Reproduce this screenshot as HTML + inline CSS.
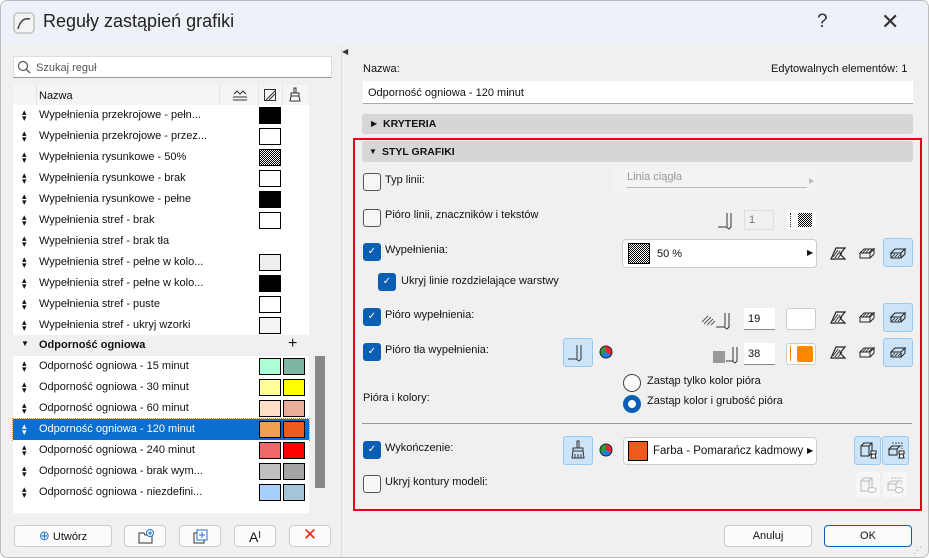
<!DOCTYPE html>
<html><head><meta charset="utf-8"><style>
*{box-sizing:border-box;margin:0;padding:0}
body{width:929px;height:558px;background:#fff;font-family:"Liberation Sans",sans-serif;font-size:11px;color:#111;position:relative;overflow:hidden}
.win{position:absolute;left:0;top:0;width:929px;height:558px;background:#f0f0f0;border:1px solid #bbb;border-radius:7px;overflow:hidden}
.title{position:absolute;left:0;top:0;width:929px;height:45px;background:#eef1f7}
.abs{position:absolute}
.row{position:absolute;left:12px;width:296px;height:21px;background:#fff}
.row .ar{position:absolute;left:9px;top:4px;font-size:9px;line-height:6px}
.row .t{position:absolute;left:26px;top:4px;white-space:nowrap}
.sw{position:absolute;width:22px;height:17px;border:1px solid #000;top:2px}
.btn{position:absolute;background:#fbfbfb;border:1px solid #ccc;border-radius:4px;text-align:center}
.cb{position:absolute;width:18px;height:18px;border:1px solid #555;border-radius:3px;background:#f7f7f7}
.cbk{position:absolute;width:18px;height:18px;border-radius:3px;background:#0a5fb4;color:#fff;font-size:10px;text-align:center;line-height:18px}
.lbl{position:absolute;white-space:nowrap}
.ib{position:absolute;width:30px;height:29px;border-radius:3px}
.ibs{background:#cce4f7;border:1px solid #99c8ef}
.fld{position:absolute;background:#fff;border:1px solid #ddd;border-bottom:1px solid #888}
svg.ic{position:absolute}
</style></head><body><div class="win">
<svg width="0" height="0" style="position:absolute"><defs>
<symbol id="sec" viewBox="0 0 18 14"><path d="M2 13L7 2H16L11 8L16 13Z" fill="none" stroke="#222" stroke-width="1.2"/><path d="M4 11L9 4M6 12L11 5M9 12L13 7" stroke="#222" stroke-width="0.9"/></symbol>
<symbol id="box" viewBox="0 0 18 14"><path d="M2 7L6 3H16L12 7ZM2 7H12V12H2ZM12 7L16 3V8L12 12" fill="none" stroke="#222" stroke-width="1"/><path d="M5 6.5L8 3.5M8 6.5L11 3.5M11 6.5L14 3.5" stroke="#222" stroke-width="0.8"/></symbol>
<symbol id="box2" viewBox="0 0 18 14"><path d="M2 7L6 3H16L12 7ZM2 7H12V12H2ZM12 7L16 3V8L12 12" fill="none" stroke="#222" stroke-width="1"/><path d="M3 11L6 8M6 11L9 8M9 11L12 8" stroke="#222" stroke-width="0.8"/></symbol>
</defs></svg>
<div class="title"></div>
<svg class="abs" style="left:12px;top:11px" width="22" height="22"><rect x="1" y="1" width="20" height="20" rx="4" fill="#f4f4f4" stroke="#aaa"/><path d="M5 17 Q8 5 17 7" stroke="#444" stroke-width="1.5" fill="none"/></svg>
<div class="lbl" style="left:42px;top:10px;font-size:18px;color:#222">Reguły zastąpień grafiki</div>
<div class="lbl" style="left:816px;top:10px;font-size:19px;color:#333">?</div>
<div class="lbl" style="left:880px;top:8px;font-size:22px;color:#333">✕</div>

<!-- left -->
<div class="fld" style="left:12px;top:55px;width:319px;height:22px;border:1px solid #ddd;border-bottom:1px solid #999"></div>
<svg class="abs" style="left:16px;top:59px" width="14" height="14"><circle cx="6" cy="6" r="4.5" stroke="#555" fill="none" stroke-width="1.2"/><path d="M9 9l4 4" stroke="#555" stroke-width="1.3"/></svg>
<div class="lbl" style="left:35px;top:61px;color:#555">Szukaj reguł</div>
<div class="abs" style="left:12px;top:84px;width:295px;height:20px;background:#f5f5f5"></div>
<div class="lbl" style="left:38px;top:89px">Nazwa</div>
<div class="abs" style="left:35px;top:84px;width:1px;height:20px;background:#e4e4e4"></div>
<div class="abs" style="left:218px;top:84px;width:1px;height:20px;background:#e4e4e4"></div>
<div class="abs" style="left:257px;top:84px;width:1px;height:20px;background:#e4e4e4"></div>
<div class="abs" style="left:281px;top:84px;width:1px;height:20px;background:#e4e4e4"></div>
<svg class="ic" style="left:231px;top:88px" width="16" height="12"><path d="M2 5L5 2L8 5L11 2L14 5M1 8H15M1 11H15" stroke="#333" fill="none"/></svg>
<svg class="ic" style="left:262px;top:87px" width="14" height="14"><rect x="1.5" y="1.5" width="11" height="11" fill="none" stroke="#333"/><path d="M3 12L12 3M6 12L12 6" stroke="#333"/></svg>
<svg class="ic" style="left:288px;top:86px" width="12" height="15"><path d="M5 1H7V6H5Z M2 6H10V9H2Z M2 9L1 14H11L10 9" stroke="#333" fill="none"/></svg>
<div class="abs" style="left:12px;top:104px;width:296px;height:408px;background:#fff"></div>

<div class="row" style="top:104px"><span class="ar">▴<br>▾</span><span class="t">Wypełnienia przekrojowe - pełn...</span><span class="sw" style="left:246px;background:#000"></span></div>
<div class="row" style="top:125px"><span class="ar">▴<br>▾</span><span class="t">Wypełnienia przekrojowe - przez...</span><span class="sw" style="left:246px;background:#fff"></span></div>
<div class="row" style="top:146px"><span class="ar">▴<br>▾</span><span class="t">Wypełnienia rysunkowe - 50%</span><span class="sw" style="left:246px;background:repeating-conic-gradient(#000 0 25%,#fff 0 50%) 0 0/2px 2px"></span></div>
<div class="row" style="top:167px"><span class="ar">▴<br>▾</span><span class="t">Wypełnienia rysunkowe - brak</span><span class="sw" style="left:246px;background:#fff"></span></div>
<div class="row" style="top:188px"><span class="ar">▴<br>▾</span><span class="t">Wypełnienia rysunkowe - pełne</span><span class="sw" style="left:246px;background:#000"></span></div>
<div class="row" style="top:209px"><span class="ar">▴<br>▾</span><span class="t">Wypełnienia stref - brak</span><span class="sw" style="left:246px;background:#fff"></span></div>
<div class="row" style="top:230px"><span class="ar">▴<br>▾</span><span class="t">Wypełnienia stref - brak tła</span></div>
<div class="row" style="top:251px"><span class="ar">▴<br>▾</span><span class="t">Wypełnienia stref - pełne w kolo...</span><span class="sw" style="left:246px;background:#eee"></span></div>
<div class="row" style="top:272px"><span class="ar">▴<br>▾</span><span class="t">Wypełnienia stref - pełne w kolo...</span><span class="sw" style="left:246px;background:#000"></span></div>
<div class="row" style="top:293px"><span class="ar">▴<br>▾</span><span class="t">Wypełnienia stref - puste</span><span class="sw" style="left:246px;background:#fff"></span></div>
<div class="row" style="top:314px"><span class="ar">▴<br>▾</span><span class="t">Wypełnienia stref - ukryj wzorki</span><span class="sw" style="left:246px;background:#f4f4f4"></span></div>
<div class="row" style="top:334px;background:#f0f0f0"><span class="lbl" style="left:8px;top:4px;font-size:8px">▼</span><span class="t" style="font-weight:bold">Odporność ogniowa</span><span class="lbl" style="left:275px;top:0px;font-size:16px">+</span></div>
<div class="row" style="top:355px"><span class="ar">▴<br>▾</span><span class="t">Odporność ogniowa -  15 minut</span><span class="sw" style="left:246px;background:#aaffd4"></span><span class="sw" style="left:270px;background:#7fb5a5"></span></div>
<div class="row" style="top:376px"><span class="ar">▴<br>▾</span><span class="t">Odporność ogniowa -  30 minut</span><span class="sw" style="left:246px;background:#ffff99"></span><span class="sw" style="left:270px;background:#ffff00"></span></div>
<div class="row" style="top:397px"><span class="ar">▴<br>▾</span><span class="t">Odporność ogniowa -  60 minut</span><span class="sw" style="left:246px;background:#ffe0c4"></span><span class="sw" style="left:270px;background:#e8ae9a"></span></div>
<div class="row" style="top:418px;background:#0a6fd0;color:#fff;outline:1px dotted #e08020"><span class="ar" style="color:#fff">▴<br>▾</span><span class="t">Odporność ogniowa - 120 minut</span><span class="sw" style="left:246px;background:#f0a050"></span><span class="sw" style="left:270px;background:#ec5a1c"></span></div>
<div class="row" style="top:439px"><span class="ar">▴<br>▾</span><span class="t">Odporność ogniowa - 240 minut</span><span class="sw" style="left:246px;background:#f06868"></span><span class="sw" style="left:270px;background:#ff0000"></span></div>
<div class="row" style="top:460px"><span class="ar">▴<br>▾</span><span class="t">Odporność ogniowa - brak wym...</span><span class="sw" style="left:246px;background:#c0c0c0"></span><span class="sw" style="left:270px;background:#a4a4a4"></span></div>
<div class="row" style="top:481px"><span class="ar">▴<br>▾</span><span class="t">Odporność ogniowa - niezdefini...</span><span class="sw" style="left:246px;background:#a8d0ff"></span><span class="sw" style="left:270px;background:#a4c4d8"></span></div>
<div class="abs" style="left:314px;top:355px;width:10px;height:132px;background:#888"></div>

<div class="btn" style="left:13px;top:524px;width:98px;height:22px;line-height:20px"><span style="color:#1a6fd0;font-size:13px">⊕</span> Utwórz</div>
<div class="btn" style="left:123px;top:524px;width:42px;height:22px"></div>
<svg class="ic" style="left:136px;top:527px" width="18" height="17"><path d="M2 5H7L8 7H15V15H2Z" fill="none" stroke="#333"/><circle cx="13" cy="5" r="3.5" fill="#fff" stroke="#1a6fd0"/><path d="M13 3V7M11 5H15" stroke="#1a6fd0"/></svg>
<div class="btn" style="left:178px;top:524px;width:42px;height:22px"></div>
<svg class="ic" style="left:191px;top:527px" width="18" height="17"><rect x="2" y="5" width="10" height="10" fill="none" stroke="#333"/><rect x="5" y="2" width="10" height="10" fill="#fff" stroke="#1a6fd0"/><path d="M10 4V10M7 7H13" stroke="#1a6fd0"/></svg>
<div class="btn" style="left:233px;top:524px;width:42px;height:22px;line-height:20px;font-size:14px">A<span style="font-size:10px;vertical-align:4px">I</span></div>
<div class="btn" style="left:288px;top:524px;width:42px;height:22px;line-height:18px;font-size:17px;color:#e62810">✕</div>

<div class="abs" style="left:340px;top:45px;width:1px;height:513px;background:#ddd"></div>
<div class="lbl" style="left:341px;top:46px;font-size:8px;color:#333">◀</div>

<!-- right -->
<div class="lbl" style="left:362px;top:62px">Nazwa:</div>
<div class="lbl" style="left:770px;top:62px">Edytowalnych elementów: 1</div>
<div class="abs" style="left:362px;top:80px;width:550px;height:23px;background:#fff;border-bottom:1px solid #aaa"></div>
<div class="lbl" style="left:367px;top:86px">Odporność ogniowa - 120 minut</div>
<div class="abs" style="left:361px;top:113px;width:551px;height:20px;background:#d6d6d6;border-radius:3px"></div>
<div class="lbl" style="left:370px;top:118px;font-size:8px">▶</div>
<div class="lbl" style="left:382px;top:117px;font-weight:bold;font-size:10.5px">KRYTERIA</div>
<div class="abs" style="left:352px;top:137px;width:569px;height:373px;border:2px solid #e8001a"></div>
<div class="abs" style="left:361px;top:140px;width:551px;height:21px;background:#d6d6d6;border-radius:3px"></div>
<div class="lbl" style="left:368px;top:146px;font-size:8px">▼</div>
<div class="lbl" style="left:381px;top:145px;font-weight:bold;font-size:10.5px">STYL GRAFIKI</div>

<div class="cb" style="left:362px;top:172px"></div><div class="lbl" style="left:384px;top:173px">Typ linii:</div>
<div class="abs" style="left:612px;top:168px;width:203px;height:23px;background:#f3f3f3;border-radius:3px"></div>
<div class="lbl" style="left:626px;top:170px;color:#999">Linia ciągła</div>
<div class="abs" style="left:625px;top:186px;width:181px;height:1px;background:#bbb"></div>
<div class="lbl" style="left:808px;top:176px;font-size:7px;color:#bbb">▶</div>

<div class="cb" style="left:362px;top:208px"></div><div class="lbl" style="left:384px;top:208px">Pióro linii, znaczników i tekstów</div>
<svg class="ic" style="left:716px;top:209px" width="22" height="20"><path d="M1 17H9M9 17L12 19L14 17V3M10 3V17" stroke="#333" fill="none"/></svg>
<div class="abs" style="left:743px;top:209px;width:30px;height:20px;border:1px solid #ddd;background:#f0f0f0"></div>
<div class="lbl" style="left:748px;top:213px;color:#777">1</div>
<div class="abs" style="left:785px;top:209px;width:30px;height:20px;background:#fafafa;border-radius:3px"></div>
<div class="abs" style="left:789px;top:212px;width:1px;height:14px;border-left:1px dotted #333"></div>
<div class="abs" style="left:797px;top:212px;width:14px;height:14px;background:repeating-conic-gradient(#000 0 25%,#fff 0 50%) 0 0/2px 2px"></div>

<div class="cbk" style="left:362px;top:242px">✓</div><div class="lbl" style="left:384px;top:243px">Wypełnienia:</div>
<div class="abs" style="left:621px;top:238px;width:195px;height:29px;background:#fff;border:1px solid #ccc;border-radius:4px"></div>
<div class="abs" style="left:627px;top:242px;width:22px;height:21px;border:1px solid #000;background:repeating-conic-gradient(#000 0 25%,#fff 0 50%) 0 0/2px 2px"></div>
<div class="lbl" style="left:656px;top:247px">50 %</div>
<div class="lbl" style="left:806px;top:247px;font-size:8px">▶</div>

<div class="cbk" style="left:377px;top:272px">✓</div><div class="lbl" style="left:400px;top:274px">Ukryj linie rozdzielające warstwy</div>

<div class="cbk" style="left:362px;top:307px">✓</div><div class="lbl" style="left:384px;top:308px">Pióro wypełnienia:</div>
<svg class="ic" style="left:700px;top:309px" width="40" height="20"><path d="M1 12L7 6M3 14L10 7M6 15L12 9M10 15L14 11" stroke="#555"/><path d="M15 17H23M23 17L26 19L28 17V3M24 3V17" stroke="#333" fill="none"/></svg>
<div class="abs" style="left:743px;top:307px;width:31px;height:22px;background:#fff;border-bottom:1px solid #888"></div>
<div class="lbl" style="left:747px;top:312px">19</div>
<div class="abs" style="left:785px;top:307px;width:30px;height:22px;background:#fff;border:1px solid #ccc;border-radius:3px"></div>

<div class="cbk" style="left:362px;top:342px">✓</div><div class="lbl" style="left:384px;top:343px">Pióro tła wypełnienia:</div>
<div class="ib ibs" style="left:562px;top:337px"></div>
<svg class="ic" style="left:566px;top:341px" width="22" height="20"><path d="M1 17H9M9 17L12 19L14 17V3M10 3V17" stroke="#333" fill="none"/></svg>
<svg class="abs" style="left:598px;top:344px" width="14" height="14"><circle cx="7" cy="7" r="6" fill="#1e7ee0"/><path d="M7 7V1A6 6 0 0 1 12.2 10Z" fill="#e23"/><path d="M7 7L1.8 10A6 6 0 0 1 7 1Z" fill="#2a9a3a"/><circle cx="7" cy="7" r="6" fill="none" stroke="#222"/></svg>
<div class="abs" style="left:712px;top:350px;width:12px;height:12px;background:#999"></div>
<svg class="ic" style="left:724px;top:343px" width="22" height="20"><path d="M1 17H7M7 17L10 19L12 17V3M8 3V17" stroke="#333" fill="none"/></svg>
<div class="abs" style="left:743px;top:342px;width:31px;height:22px;background:#fff;border-bottom:1px solid #888"></div>
<div class="lbl" style="left:747px;top:347px">38</div>
<div class="abs" style="left:785px;top:342px;width:30px;height:22px;background:#fff;border:1px solid #ccc;border-radius:3px"></div>
<div class="abs" style="left:789px;top:345px;width:1px;height:15px;background:#f80"></div>
<div class="abs" style="left:796px;top:345px;width:16px;height:16px;background:#f80;border-radius:2px"></div>

<!-- section icons -->
<svg class="ic" style="left:828px;top:245px" width="18" height="14"><use href="#sec"/></svg>
<svg class="ic" style="left:857px;top:245px" width="18" height="14"><use href="#box"/></svg>
<div class="ib ibs" style="left:882px;top:237px"></div>
<svg class="ic" style="left:888px;top:245px" width="18" height="14"><use href="#box2"/></svg>
<svg class="ic" style="left:828px;top:309px" width="18" height="14"><use href="#sec"/></svg>
<svg class="ic" style="left:857px;top:309px" width="18" height="14"><use href="#box"/></svg>
<div class="ib ibs" style="left:882px;top:302px"></div>
<svg class="ic" style="left:888px;top:309px" width="18" height="14"><use href="#box2"/></svg>
<svg class="ic" style="left:828px;top:344px" width="18" height="14"><use href="#sec"/></svg>
<svg class="ic" style="left:857px;top:344px" width="18" height="14"><use href="#box"/></svg>
<div class="ib ibs" style="left:882px;top:337px"></div>
<svg class="ic" style="left:888px;top:344px" width="18" height="14"><use href="#box2"/></svg>

<div class="lbl" style="left:362px;top:391px">Pióra i kolory:</div>
<div class="abs" style="left:622px;top:373px;width:18px;height:18px;border:1px solid #444;border-radius:50%;background:#fafafa"></div>
<div class="lbl" style="left:646px;top:374px">Zastąp tylko kolor pióra</div>
<div class="abs" style="left:622px;top:394px;width:18px;height:18px;border-radius:50%;background:#fff;border:5px solid #0a5fb4"></div>
<div class="lbl" style="left:646px;top:394px">Zastąp kolor i grubość pióra</div>
<div class="abs" style="left:361px;top:422px;width:550px;height:1px;background:#999"></div>

<div class="cbk" style="left:362px;top:440px">✓</div><div class="lbl" style="left:384px;top:441px">Wykończenie:</div>
<div class="ib ibs" style="left:562px;top:435px"></div>
<svg class="ic" style="left:569px;top:439px" width="16" height="20"><path d="M7 1H9V8H7Z M3 8H13V11H3Z M3 11L2 18H14L13 11M5 14V18M8 14V18M11 14V18" stroke="#333" fill="none"/></svg>
<svg class="abs" style="left:598px;top:442px" width="14" height="14"><circle cx="7" cy="7" r="6" fill="#1e7ee0"/><path d="M7 7V1A6 6 0 0 1 12.2 10Z" fill="#e23"/><path d="M7 7L1.8 10A6 6 0 0 1 7 1Z" fill="#2a9a3a"/><circle cx="7" cy="7" r="6" fill="none" stroke="#222"/></svg>
<div class="abs" style="left:622px;top:436px;width:194px;height:28px;background:#fff;border:1px solid #ccc;border-radius:4px"></div>
<div class="abs" style="left:627px;top:440px;width:20px;height:20px;background:#ec5a1c;border:1px solid #000"></div>
<div class="lbl" style="left:652px;top:444px;font-size:11.5px">Farba - Pomarańcz kadmowy</div>
<div class="lbl" style="left:806px;top:445px;font-size:8px">▶</div>
<div class="ib ibs" style="left:853px;top:435px;width:27px"></div>
<svg class="ic" style="left:857px;top:439px" width="20" height="20"><path d="M3 6L6 3H14V13L11 16H3ZM3 6H11V16M11 6L14 3" fill="none" stroke="#222"/><path d="M13 11H18V14H13ZM14 14L13 18H18L17 14" fill="#fff" stroke="#222"/></svg>
<div class="ib ibs" style="left:881px;top:435px;width:27px"></div>
<svg class="ic" style="left:885px;top:439px" width="20" height="20"><path d="M3 9L6 6H14L11 9ZM3 9H11V15H3Z" fill="none" stroke="#222"/><path d="M6 3H16V9" fill="none" stroke="#555" stroke-dasharray="2 1"/><path d="M13 11H18V14H13ZM14 14L13 18H18L17 14" fill="#fff" stroke="#222"/></svg>

<div class="cb" style="left:362px;top:474px"></div><div class="lbl" style="left:384px;top:475px">Ukryj kontury modeli:</div>
<div class="ib" style="left:855px;top:471px;width:24px;height:26px;background:#f6f6f6"></div>
<svg class="ic" style="left:857px;top:474px" width="20" height="20"><path d="M3 6L6 3H14V13L11 16H3ZM3 6H11V16M11 6L14 3" fill="none" stroke="#bbb"/><ellipse cx="14" cy="15" rx="4" ry="2.5" fill="#fff" stroke="#bbb"/></svg>
<div class="ib" style="left:882px;top:471px;width:24px;height:26px;background:#f6f6f6"></div>
<svg class="ic" style="left:884px;top:474px" width="20" height="20"><path d="M3 9L6 6H14L11 9ZM3 9H11V15H3Z" fill="none" stroke="#bbb"/><path d="M6 3H16V9" fill="none" stroke="#bbb" stroke-dasharray="2 1"/><ellipse cx="14" cy="15" rx="4" ry="2.5" fill="#fff" stroke="#bbb"/></svg>

<div class="btn" style="left:723px;top:524px;width:88px;height:22px;line-height:20px">Anuluj</div>
<div class="btn" style="left:823px;top:524px;width:88px;height:22px;line-height:20px;border:1px solid #0a5fb4">OK</div>
<div class="lbl" style="left:912px;top:544px;font-size:9px;color:#999">⋰</div>
</div></body></html>
